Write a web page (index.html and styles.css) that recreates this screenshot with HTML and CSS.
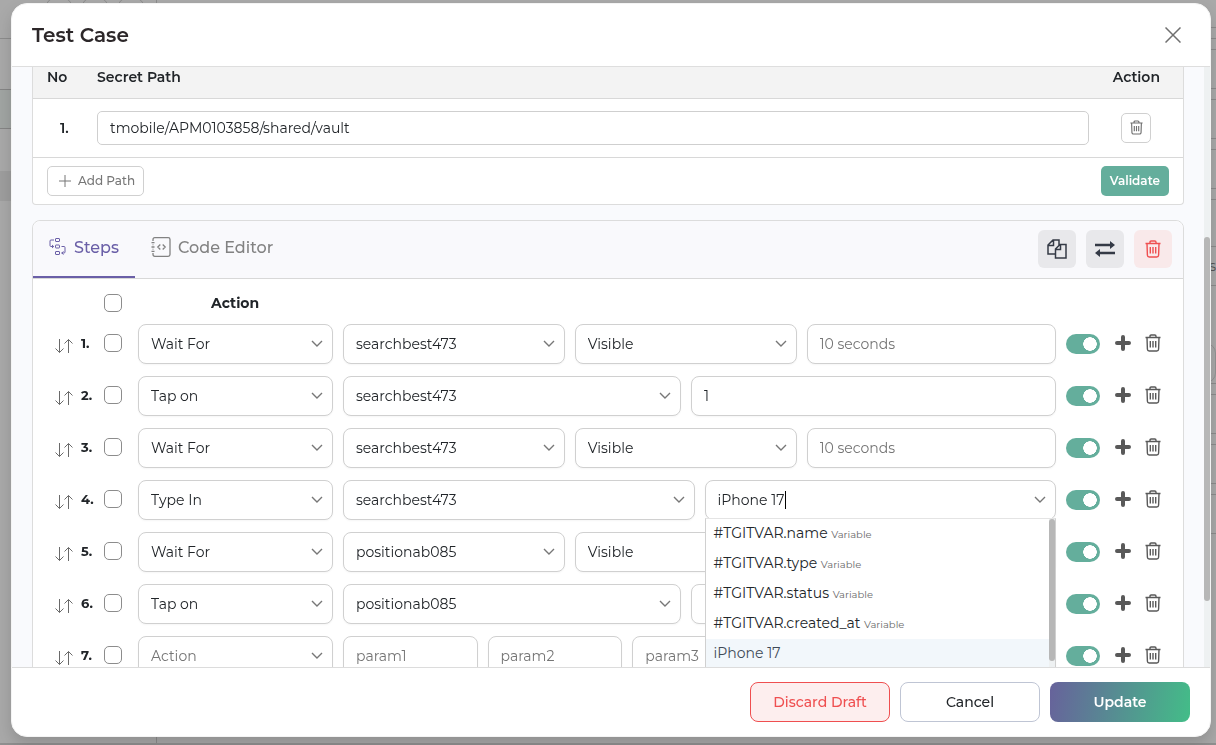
FILE: index.html
```html
<!DOCTYPE html>
<html lang="en">
<head>
  <meta charset="utf-8">
  <title>Test Case</title>
  <link rel="stylesheet" href="styles.css">
</head>
<body>
  <svg class="sprite" aria-hidden="true">
    <symbol id="trash" viewBox="0 0 16 18">
      <path d="M0.5 3.5h15M5 3.5V2.2Q5 1 6.2 1h3.6Q11 1 11 2.2v1.3M2 3.5l.4 11.8q.1 1.7 1.8 1.7h7.600q1.700 0 1.800-1.700L14 3.5M5.300 7v6.500M8 7v6.500M10.700 7v6.500"/>
    </symbol>
    <symbol id="plus" viewBox="0 0 16 16">
      <path d="M8 2v12M2 8h12"/>
    </symbol>
    <symbol id="move" viewBox="0 0 18 16">
      <path d="M4.500 1v13.500M.5 10.500l4 4 4-4M13.500 15V1.500M9.500 5.500l4-4 4 4"/>
    </symbol>
  </svg>

  <!-- page behind the dialog -->
  <div class="page">
    <div class="page-side">
      <div class="side-head"><span class="dot"></span><span class="dot"></span><span class="dot"></span></div>
      <div class="side-row"></div>
      <div class="side-row active"></div>
      <div class="side-block"></div>
    </div>
    <div class="page-main">
      <div class="page-box first"></div>
      <div class="page-box"></div>
      <div class="page-box"></div>
      <div class="page-box"></div>
      <div class="page-box wide"></div>
      <div class="page-label">s</div>
      <div class="page-box tall"><span class="pill"></span></div>
      <div class="page-box"></div>
      <div class="page-box"></div>
      <div class="page-box"></div>
    </div>
  </div>

  <div class="overlay">
    <div class="modal" role="dialog" aria-labelledby="modalTitle">
      <div class="modal-header">
        <h1 id="modalTitle">Test Case</h1>
        <button class="close-button" aria-label="Close">
          <svg viewBox="0 0 16 16"><path d="M.5.5l15 15M15.500.5l-15 15"/></svg>
        </button>
      </div>

      <div class="modal-body">
        <div class="paths">
          <table class="path-table">
            <thead>
              <tr><th class="col-no">No</th><th>Secret Path</th><th class="col-action">Action</th></tr>
            </thead>
            <tbody>
              <tr>
                <td class="path-no">1.</td>
                <td><input type="text" class="path-input" aria-label="Secret path 1" value="tmobile/APM0103858/shared/vault"></td>
                <td class="path-action">
                  <button class="small-button" aria-label="Delete path"><svg class="icon-trash"><use href="#trash"/></svg></button>
                </td>
              </tr>
            </tbody>
          </table>
          <div class="paths-footer">
            <button class="add-button"><svg viewBox="0 0 12 12"><path d="M6 0v12M0 6h12"/></svg>Add Path</button>
            <button class="validate-button">Validate</button>
          </div>
        </div>

        <div class="steps">
          <div class="steps-header">
            <div class="tabs" role="tablist">
              <button class="tab active" role="tab" aria-selected="true">
                <svg class="icon-steps" viewBox="0 0 18 18"><rect x="6.500" y=".5" width="4" height="3" rx=".5"/><rect x="6.500" y="7" width="4" height="3" rx=".5"/><rect x="6.500" y="13.500" width="4" height="3" rx=".5"/><path d="M5 2H2Q1 2 1 3v4.500q0 1 1 1h2.500M3 7l1.700 1.500L3 10M12.500 8.500H15q1 0 1 1V14q0 1-1 1h-2.500M14.500 13.500L12.800 15l1.700 1.500"/></svg>
                Steps
              </button>
              <button class="tab" role="tab" aria-selected="false">
                <svg class="icon-code" viewBox="0 0 20 20"><path d="M2 4V2.500Q2 .7 3.800.7h13.400Q19 .7 19 2.500v15q0 1.800-1.800 1.800H3.800Q2 19.300 2 17.500V16M.5 5.700h3M.5 10h3M.5 14.300h3M2 7.500v.8M2 11.700v.8M9.300 7.500L6.800 10l2.500 2.500M11.700 7.500l2.500 2.500-2.500 2.500"/></svg>
                Code Editor
              </button>
            </div>
            <div class="tools">
              <button class="tool-button" aria-label="Copy steps">
                <svg class="icon-copy" viewBox="0 0 20 20"><path d="M8 15H1V6l5-5h6v5M1 6.500h5.500V1M8.500 10l4.500-4.500h6V19H8.500zM8.500 10.500H13.500V5.500"/></svg>
              </button>
              <button class="tool-button" aria-label="Reorder steps">
                <svg class="icon-swap" viewBox="0 0 20 16"><path d="M0 4h16M4 12h16"/><path class="heads" d="M15 0l5 4-5 4zM5 8l-5 4 5 4z"/></svg>
              </button>
              <button class="tool-button danger" aria-label="Delete steps"><svg class="icon-trash"><use href="#trash"/></svg></button>
            </div>
          </div>

          <div class="step-head">
            <input type="checkbox" class="check" aria-label="Select all steps">
            <span>Action</span>
          </div>

          <div class="step">
            <svg class="icon-move"><use href="#move"/></svg>
            <span class="step-no">1.</span>
            <input type="checkbox" class="check" aria-label="Select step 1">
            <select class="field" aria-label="Action 1"><option>Wait For</option></select>
            <div class="params wait">
              <select class="field" aria-label="Element 1"><option>searchbest473</option></select>
              <select class="field" aria-label="State 1"><option>Visible</option></select>
              <input type="text" class="field" aria-label="Timeout 1" placeholder="10 seconds">
            </div>
            <input type="checkbox" class="toggle" aria-label="Step 1 enabled" checked>
            <button class="icon-button" aria-label="Add step after 1"><svg class="icon-plus"><use href="#plus"/></svg></button>
            <button class="icon-button" aria-label="Delete step 1"><svg class="icon-trash"><use href="#trash"/></svg></button>
          </div>

          <div class="step">
            <svg class="icon-move"><use href="#move"/></svg>
            <span class="step-no">2.</span>
            <input type="checkbox" class="check" aria-label="Select step 2">
            <select class="field" aria-label="Action 2"><option>Tap on</option></select>
            <div class="params tap">
              <select class="field" aria-label="Element 2"><option>searchbest473</option></select>
              <input type="text" class="field" aria-label="Count 2" value="1">
            </div>
            <input type="checkbox" class="toggle" aria-label="Step 2 enabled" checked>
            <button class="icon-button" aria-label="Add step after 2"><svg class="icon-plus"><use href="#plus"/></svg></button>
            <button class="icon-button" aria-label="Delete step 2"><svg class="icon-trash"><use href="#trash"/></svg></button>
          </div>

          <div class="step">
            <svg class="icon-move"><use href="#move"/></svg>
            <span class="step-no">3.</span>
            <input type="checkbox" class="check" aria-label="Select step 3">
            <select class="field" aria-label="Action 3"><option>Wait For</option></select>
            <div class="params wait">
              <select class="field" aria-label="Element 3"><option>searchbest473</option></select>
              <select class="field" aria-label="State 3"><option>Visible</option></select>
              <input type="text" class="field" aria-label="Timeout 3" placeholder="10 seconds">
            </div>
            <input type="checkbox" class="toggle" aria-label="Step 3 enabled" checked>
            <button class="icon-button" aria-label="Add step after 3"><svg class="icon-plus"><use href="#plus"/></svg></button>
            <button class="icon-button" aria-label="Delete step 3"><svg class="icon-trash"><use href="#trash"/></svg></button>
          </div>

          <div class="step">
            <svg class="icon-move"><use href="#move"/></svg>
            <span class="step-no">4.</span>
            <input type="checkbox" class="check" aria-label="Select step 4">
            <select class="field" aria-label="Action 4"><option>Type In</option></select>
            <div class="params type">
              <select class="field" aria-label="Element 4"><option>searchbest473</option></select>
              <div class="combo">
                <input type="text" class="field combo-input" role="combobox" aria-expanded="true" aria-controls="valueList" aria-label="Value 4" value="iPhone 17">
                <span class="caret"></span>
                <div class="combo-menu">
                  <ul id="valueList" role="listbox">
                    <li role="option">#TGITVAR.name <small>Variable</small></li>
                    <li role="option">#TGITVAR.type <small>Variable</small></li>
                    <li role="option">#TGITVAR.status <small>Variable</small></li>
                    <li role="option">#TGITVAR.created_at <small>Variable</small></li>
                    <li role="option" class="selected" aria-selected="true">iPhone 17</li>
                  </ul>
                  <div class="menu-track"><div class="menu-thumb"></div></div>
                </div>
              </div>
            </div>
            <input type="checkbox" class="toggle" aria-label="Step 4 enabled" checked>
            <button class="icon-button" aria-label="Add step after 4"><svg class="icon-plus"><use href="#plus"/></svg></button>
            <button class="icon-button" aria-label="Delete step 4"><svg class="icon-trash"><use href="#trash"/></svg></button>
          </div>

          <div class="step">
            <svg class="icon-move"><use href="#move"/></svg>
            <span class="step-no">5.</span>
            <input type="checkbox" class="check" aria-label="Select step 5">
            <select class="field" aria-label="Action 5"><option>Wait For</option></select>
            <div class="params wait">
              <select class="field" aria-label="Element 5"><option>positionab085</option></select>
              <select class="field" aria-label="State 5"><option>Visible</option></select>
              <input type="text" class="field" aria-label="Timeout 5">
            </div>
            <input type="checkbox" class="toggle" aria-label="Step 5 enabled" checked>
            <button class="icon-button" aria-label="Add step after 5"><svg class="icon-plus"><use href="#plus"/></svg></button>
            <button class="icon-button" aria-label="Delete step 5"><svg class="icon-trash"><use href="#trash"/></svg></button>
          </div>

          <div class="step">
            <svg class="icon-move"><use href="#move"/></svg>
            <span class="step-no">6.</span>
            <input type="checkbox" class="check" aria-label="Select step 6">
            <select class="field" aria-label="Action 6"><option>Tap on</option></select>
            <div class="params tap">
              <select class="field" aria-label="Element 6"><option>positionab085</option></select>
              <input type="text" class="field" aria-label="Count 6">
            </div>
            <input type="checkbox" class="toggle" aria-label="Step 6 enabled" checked>
            <button class="icon-button" aria-label="Add step after 6"><svg class="icon-plus"><use href="#plus"/></svg></button>
            <button class="icon-button" aria-label="Delete step 6"><svg class="icon-trash"><use href="#trash"/></svg></button>
          </div>

          <div class="step">
            <svg class="icon-move"><use href="#move"/></svg>
            <span class="step-no">7.</span>
            <input type="checkbox" class="check" aria-label="Select step 7">
            <select class="field empty" aria-label="Action 7"><option>Action</option></select>
            <div class="params blank">
              <input type="text" class="field" aria-label="Param 1" placeholder="param1">
              <input type="text" class="field" aria-label="Param 2" placeholder="param2">
              <input type="text" class="field" aria-label="Param 3" placeholder="param3">
              <input type="text" class="field" aria-label="Param 4">
              <input type="text" class="field" aria-label="Param 5">
            </div>
            <input type="checkbox" class="toggle" aria-label="Step 7 enabled" checked>
            <button class="icon-button" aria-label="Add step after 7"><svg class="icon-plus"><use href="#plus"/></svg></button>
            <button class="icon-button" aria-label="Delete step 7"><svg class="icon-trash"><use href="#trash"/></svg></button>
          </div>
        </div>
        <div class="body-track"><div class="body-thumb"></div></div>
      </div>

      <div class="modal-footer">
        <button class="footer-button discard">Discard Draft</button>
        <button class="footer-button cancel">Cancel</button>
        <button class="footer-button update">Update</button>
      </div>
    </div>
  </div>
</body>
</html>
```
FILE: styles.css
```css
* {
  box-sizing: border-box;
}
body {
  margin: 0;
  height: 100vh;
  overflow: hidden;
  background: #a9a9a9;
  font-family: Montserrat, Inter, sans-serif;
  font-size: 14px;
  color: #212529;
}
button, input, select {
  font: inherit;
  margin: 0;
}
button {
  padding: 0;
  cursor: pointer;
}
svg {
  display: block;
  flex: none;
  fill: none;
  stroke: currentColor;
}
.sprite {
  position: absolute;
  width: 0;
  height: 0;
}

/* dimmed page */
.page {
  display: flex;
  height: 100vh;
  border-bottom: 2px solid #909090;
}
.page-side {
  width: 157px;
  border-right: 1px solid #8c8c8c;
}
.side-head {
  display: flex;
  gap: 6px;
  height: 39px;
  padding-left: 44px;
  border-bottom: 1px solid #8c8c8c;
}
.dot {
  width: 30px;
  height: 30px;
  margin-top: -4px;
  border: 1px solid #8c8c8c;
  border-radius: 50%;
}
.side-row {
  height: 51px;
  border-bottom: 1px solid #858585;
}
.side-row.active {
  height: 39px;
  background: #a1a5a3;
}
.side-block {
  height: 30px;
  margin-top: 42px;
  background: #9e9e9e;
}
.page-main {
  flex: 1;
}
.page-box {
  height: 40px;
  margin-bottom: 10px;
  border: 1px solid #8c8c8c;
  border-width: 1px 0;
}
.page-box.first {
  height: 12px;
  margin-top: 27px;
}
.page-box.wide {
  height: 48px;
  margin-bottom: 0;
}
.page-label {
  height: 38px;
  line-height: 38px;
  text-align: right;
  color: #555;
}
.page-box.tall {
  display: flex;
  align-items: flex-end;
  justify-content: flex-end;
  height: 99px;
}
.pill {
  width: 60px;
  height: 40px;
  border: 1px solid #939393;
  border-radius: 10px;
}

/* dialog */
.overlay {
  position: fixed;
  inset: 0;
  display: flex;
  padding: 3px 5px 8px 11px;
}
.modal {
  flex: 1;
  display: flex;
  flex-direction: column;
  min-width: 0;
  background: #fff;
  border: 1px solid #f4f4f4;
  border-radius: 16px;
  box-shadow: 0 8px 16px rgba(0,0,0,0.15);
  overflow: hidden;
}
.modal-header {
  display: flex;
  justify-content: space-between;
  align-items: center;
  height: 63px;
  padding: 0 29px 0 20px;
  border-bottom: 1px solid #dedede;
}
h1 {
  margin: 0;
  font-size: 20px;
  font-weight: 600;
  color: #2c2729;
}
.close-button {
  border: none;
  background: none;
  color: #6f6f6f;
}
.close-button svg {
  width: 16px;
  height: 16px;
  stroke-width: 1.5;
}
.modal-body {
  position: relative;
  flex: 1;
  min-height: 0;
  overflow: hidden;
  padding: 0 26px 0 20px;
  background: #f9fafd;
}
.body-track {
  position: absolute;
  top: 0;
  right: 0;
  bottom: 0;
  width: 6px;
  padding-top: 170px;
  background: #eef1f2;
}
.body-thumb {
  height: 364px;
  border-radius: 3px;
  background: #b7b7b7;
}

/* secret paths */
.paths {
  background: #fff;
  border: 1px solid #dcdcdc;
  border-top: none;
  border-radius: 0 0 4px 4px;
  margin-bottom: 15px;
}
.path-table {
  width: 100%;
  border-collapse: collapse;
}
.path-table th {
  height: 31px;
  padding: 0 14px 10px 0;
  background: #f3f3f3;
  border-bottom: 1px solid #d8d8d8;
  text-align: left;
  font-weight: 600;
}
.path-table .col-no {
  width: 64px;
  padding-left: 14px;
}
.path-table .col-action {
  width: 94px;
  padding-right: 23px;
  text-align: right;
}
.path-table td {
  height: 59px;
  padding: 0;
  border-bottom: 1px solid #d8d8d8;
}
.path-table .path-no {
  padding-left: 27px;
  font-weight: 600;
}
.path-input {
  display: block;
  width: 100%;
  height: 34px;
  padding: 0 12px;
  border: 1px solid #cfcfcf;
  border-radius: 5px;
  color: #212529;
}
.path-action .small-button {
  margin-left: auto;
  margin-right: 32px;
}
.small-button {
  display: flex;
  align-items: center;
  justify-content: center;
  width: 30px;
  height: 30px;
  border: 1px solid #d0d0d0;
  border-radius: 5px;
  background: #fff;
  color: #6f6f6f;
}
.small-button .icon-trash {
  width: 13px;
  height: 15px;
}
.paths-footer {
  display: flex;
  justify-content: space-between;
  padding: 8px 14px;
}
.add-button {
  display: flex;
  align-items: center;
  gap: 7px;
  height: 30px;
  padding: 0 8px 0 11px;
  border: 1px solid #d0d0d0;
  border-radius: 5px;
  background: #fff;
  color: #777;
  font-size: 12px;
  font-weight: 500;
}
.add-button svg {
  width: 12px;
  height: 12px;
}
.validate-button {
  height: 30px;
  padding: 0 9px;
  border: none;
  border-radius: 5px;
  background: #64ae9c;
  color: #fff;
  font-size: 12px;
  font-weight: 600;
}

/* steps */
.steps {
  background: #fff;
  border: 1px solid #dcdcdc;
  border-radius: 8px;
}
.steps-header {
  display: flex;
  justify-content: space-between;
  height: 58px;
  padding-right: 11px;
  border-bottom: 1px solid #d8d8d8;
  border-radius: 8px 8px 0 0;
  background: #f9f9fc;
}
.tabs {
  display: flex;
}
.tab {
  display: flex;
  align-items: center;
  gap: 7px;
  height: 57px;
  padding: 0 16px 2px;
  border: none;
  border-bottom: 2px solid transparent;
  background: none;
  color: #828282;
  font-size: 16px;
  font-weight: 500;
}
.tab.active {
  color: #6a5fa7;
  border-bottom-color: #6a5fa7;
}
.icon-steps {
  width: 18px;
  height: 18px;
}
.icon-code {
  width: 20px;
  height: 20px;
  stroke-width: 1.3;
}
.tools {
  display: flex;
  align-items: center;
  gap: 10px;
}
.tool-button {
  display: flex;
  align-items: center;
  justify-content: center;
  width: 38px;
  height: 38px;
  border: none;
  border-radius: 6px;
  background: #e8e8eb;
  color: #343a46;
}
.tool-button.danger {
  background: #f9e9ea;
  color: #ef4f50;
}
.icon-copy {
  width: 20px;
  height: 20px;
  stroke-width: 1.5;
}
.icon-swap {
  width: 20px;
  height: 16px;
  stroke-width: 2.4;
}
.heads {
  fill: currentColor;
  stroke: none;
}
.icon-trash {
  width: 16px;
  height: 18px;
  stroke-width: 1.4;
}
.icon-plus {
  width: 16px;
  height: 16px;
  stroke-width: 4;
  stroke-linecap: round;
}
.icon-move {
  width: 18px;
  height: 16px;
  color: #6a6a6a;
  margin-top: 4px;
}
.step-head {
  display: flex;
  align-items: center;
  gap: 89px;
  height: 24px;
  margin: 12px 0 9px 71px;
  font-weight: 700;
}
.check {
  appearance: none;
  flex: none;
  width: 18px;
  height: 18px;
  border: 1px solid #8c8c8c;
  border-radius: 5px;
  background: #fff;
}
.step {
  display: grid;
  grid-template-columns: 18px 31px 34px 195px 1fr 44px 31px 30px;
  align-items: center;
  margin-bottom: 12px;
  padding: 0 22px;
}
.step-no {
  padding-left: 8px;
  font-size: 13px;
  font-weight: 700;
}
.step-no, .step .check, .icon-button {
  margin-bottom: 2px;
}
.params {
  display: grid;
  gap: 10px;
  margin-left: 10px;
}
.params.wait {
  grid-template-columns: 8fr 8fr 9fr;
}
.params.tap {
  grid-template-columns: 25fr 27fr;
}
.params.type {
  grid-template-columns: 1fr 1fr;
}
.params.blank {
  grid-template-columns: repeat(5, 1fr);
}
.field {
  width: 100%;
  min-width: 0;
  height: 40px;
  padding: 0 12px;
  border: 1px solid #d0d0d0;
  border-radius: 8px;
  background: #fff;
  color: #212529;
  box-shadow: 0 1px 2px rgba(0,0,0,0.04);
}
select.field, .combo-input {
  appearance: none;
  padding-right: 30px;
  background: #fff url("data:image/svg+xml,%3Csvg xmlns='http://www.w3.org/2000/svg' width='12' height='8'%3E%3Cpath d='M1 1l5 5 5-5' fill='none' stroke='%23777' stroke-width='1.400'/%3E%3C/svg%3E") no-repeat right 9px center;
}
.field.empty, .field::placeholder {
  color: #757575;
}
.toggle {
  appearance: none;
  justify-self: end;
  width: 34px;
  height: 20px;
  border-radius: 10px;
  background: #64ae9c radial-gradient(circle at 24px 10px, #fff 6.500px, transparent 7px);
}
.icon-button {
  justify-self: end;
  border: none;
  background: none;
  color: #595959;
}

/* value picker */
.combo {
  position: relative;
}
.combo-input {
  outline: none;
}
.caret {
  position: absolute;
  left: 80px;
  top: 11px;
  width: 1px;
  height: 18px;
  background: #000;
}
.combo-menu {
  position: absolute;
  z-index: 2;
  top: 38px;
  left: 0;
  right: 0;
  display: flex;
  height: 160px;
  border: 1px solid #d0d0d0;
  border-top-color: #e4e4e4;
  background: #fff;
}
ul {
  flex: 1;
  margin: 0;
  padding: 0;
  list-style: none;
}
li {
  height: 30px;
  padding: 0 8px;
  line-height: 29px;
}
li small {
  font-size: 10px;
  color: #6a6a6a;
}
li.selected {
  background: #f2f7fb;
  color: #3f4a57;
}
.menu-track {
  width: 6px;
  background: #eef1f2;
}
.menu-thumb {
  height: 142px;
  border-radius: 3px;
  background: #b7b7b7;
}

.modal-footer {
  display: flex;
  justify-content: flex-end;
  gap: 10px;
  padding: 14px 20px;
  border-top: 1px solid #dcdcdc;
}
.footer-button {
  width: 140px;
  height: 40px;
  border: 1px solid #bfc5d4;
  border-radius: 8px;
  background: #fff;
  color: #212529;
  font-weight: 500;
}
.footer-button.discard {
  border-color: #ef4f50;
  background: #fdeeee;
  color: #ef4f50;
}
.footer-button.update {
  border: none;
  background: linear-gradient(100deg, #67629b, #43bd88);
  color: #fff;
  font-weight: 600;
}
```
